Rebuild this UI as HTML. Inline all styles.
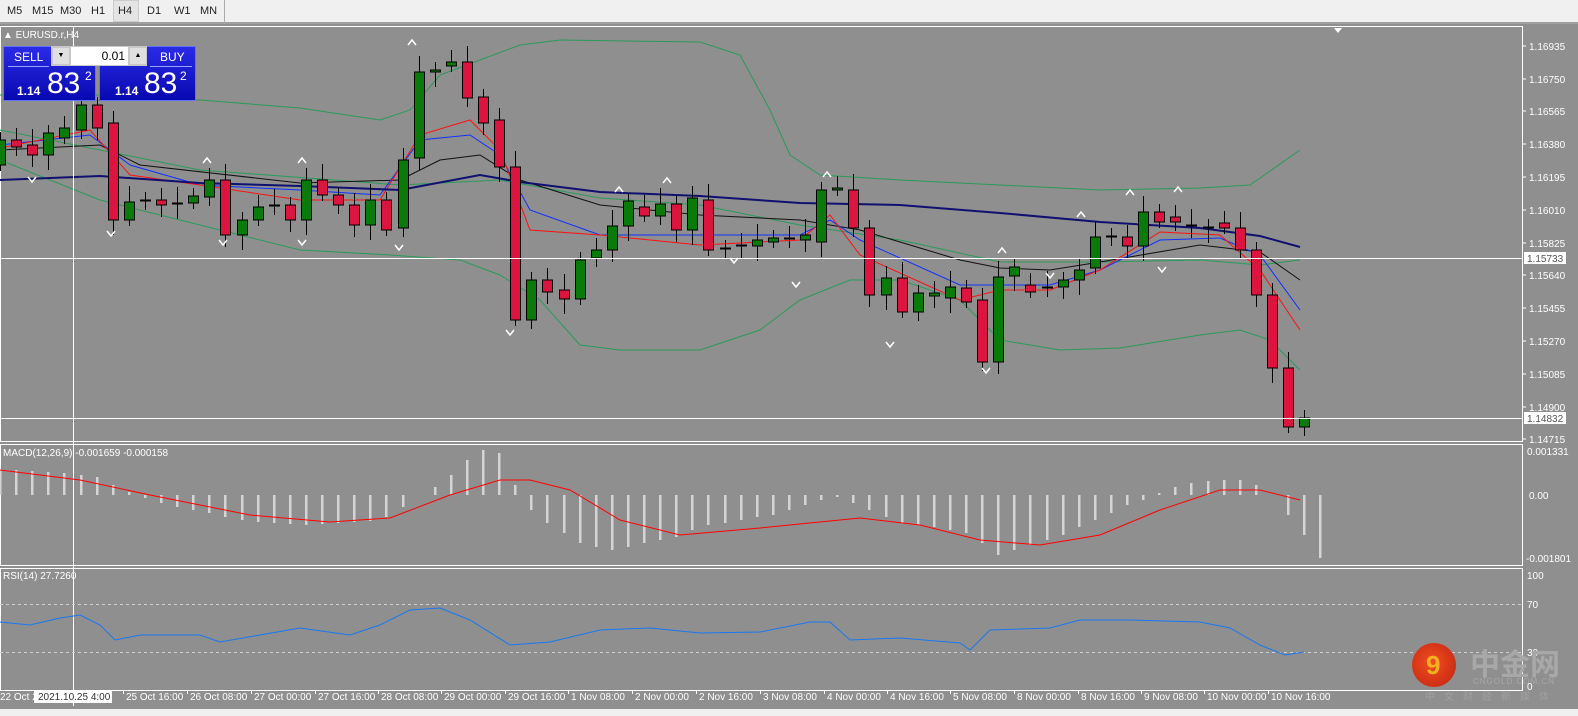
<!DOCTYPE html>
<html><head><meta charset="utf-8"><style>
*{margin:0;padding:0;box-sizing:border-box}
body{width:1578px;height:716px;overflow:hidden;background:#8f8f8f;font-family:"Liberation Sans",sans-serif;position:relative}
#tb{position:absolute;left:0;top:0;width:1578px;height:24px;background:#f0f0f0;border-bottom:2px solid #a0a0a0}
#tb span{position:absolute;top:5px;font-size:11px;color:#222}
#h4{position:absolute;left:113px;top:0;width:26px;height:22px;border:1px solid #ccc;background:#e4e4e4}
#sep{position:absolute;left:224px;top:0;width:1px;height:24px;background:#aaa}
.panel{position:absolute;background:linear-gradient(#2b2be8,#0808b0);color:#fff;border:1px solid #6070ff}
svg{position:absolute;left:0;top:0}
</style></head><body>
<div id="tb"><div id="h4"></div><div id="sep"></div>
<span style="left:7px">M5</span><span style="left:32px">M15</span><span style="left:60px">M30</span><span style="left:91px">H1</span><span style="left:118px">H4</span><span style="left:147px">D1</span><span style="left:174px">W1</span><span style="left:200px">MN</span></div>
<svg id="s" width="1578" height="716"></svg>
<div style="position:absolute;left:3px;top:46px;width:93px;height:55px" class="panel">
<div style="font-size:12px;position:absolute;left:10px;top:3px">SELL</div>
<div style="position:absolute;left:4px;top:19px;width:41px;border-top:1px solid #9aa0ff"></div>
<div style="position:absolute;left:13px;top:37px;font-size:12px;font-weight:bold">1.14</div>
<div style="position:absolute;left:43px;top:20px;font-size:30px">83</div>
<div style="position:absolute;left:81px;top:22px;font-size:12px">2</div></div>
<div style="position:absolute;left:99px;top:46px;width:97px;height:55px" class="panel">
<div style="font-size:12px;position:absolute;left:60px;top:3px">BUY</div>
<div style="position:absolute;left:50px;top:19px;width:42px;border-top:1px solid #9aa0ff"></div>
<div style="position:absolute;left:15px;top:37px;font-size:12px;font-weight:bold">1.14</div>
<div style="position:absolute;left:44px;top:20px;font-size:30px">83</div>
<div style="position:absolute;left:80px;top:22px;font-size:12px">2</div></div>
<div style="position:absolute;left:51px;top:46px;width:96px;height:20px;background:#c8c8c8"></div>
<div style="position:absolute;left:53px;top:48px;width:16px;height:16px;background:#e0e0e0;font-size:7px;text-align:center;line-height:16px">▼</div>
<div style="position:absolute;left:71px;top:47px;width:57px;height:18px;background:#fff;font-size:12px;text-align:right;padding-right:3px;line-height:18px">0.01</div>
<div style="position:absolute;left:130px;top:48px;width:16px;height:16px;background:#e0e0e0;font-size:7px;text-align:center;line-height:16px">▲</div>
<div style="position:absolute;left:3px;top:30px;font-size:10px;color:#fff">▲ EURUSD.r,H4</div>
<div style="position:absolute;left:3px;top:448px;font-size:10px;color:#fff">MACD(12,26,9) -0.001659 -0.000158</div>
<div style="position:absolute;left:3px;top:571px;font-size:10px;color:#fff">RSI(14) 27.7260</div>
<div style="position:absolute;left:1412px;top:643px;width:44px;height:44px;border-radius:50%;background:radial-gradient(circle at 45% 45%,#f05020,#c02010);"></div>
<div style="position:absolute;left:1426px;top:650px;font-size:26px;color:#f5b020;font-weight:bold">9</div>
<div style="position:absolute;left:1470px;top:640px;font-size:30px;color:#a8a8a8;font-family:'Noto Sans CJK SC',sans-serif;font-weight:bold">中金网</div>
<div style="position:absolute;left:1473px;top:677px;font-size:8px;color:#a8a8a8;letter-spacing:1px">CNGOLD.COM.CN</div>
<div style="position:absolute;left:1425px;top:688px;font-size:10px;color:#a0a0a0;letter-spacing:9px;font-family:'Noto Sans CJK SC',sans-serif">中文财经新媒体</div>
<script>
const s=document.getElementById('s');let h='';
const L=(x1,y1,x2,y2,c,w,d)=>h+=`<line x1="${x1}" y1="${y1}" x2="${x2}" y2="${y2}" stroke="${c}" stroke-width="${w||1}" ${d?'stroke-dasharray="3,3"':''}/>`;
const T=(x,y,t,c,a)=>h+=`<text x="${x}" y="${y}" font-size="10" fill="${c||'#fff'}" font-family="Liberation Sans" ${a?'text-anchor="'+a+'"':''}>${t}</text>`;
const P=(pts,c,w)=>h+=`<polyline fill="none" stroke="${c}" stroke-width="${w||1}" points="${pts.map(p=>p.join(',')).join(' ')}"/>`;
// frames
h+=`<rect x="0.5" y="26.5" width="1522" height="415" fill="none" stroke="#fff"/>`;
h+=`<rect x="0.5" y="444.5" width="1522" height="121" fill="none" stroke="#fff"/>`;
h+=`<rect x="0.5" y="568.5" width="1522" height="122" fill="none" stroke="#fff"/>`;
h+=`<polygon points="1334,28 1342,28 1338,33" fill="#fff"/>`;
// price labels
const pl=[[46,'1.16935'],[79,'1.16750'],[111,'1.16565'],[144,'1.16380'],[177,'1.16195'],[210,'1.16010'],[243,'1.15825'],[275,'1.15640'],[308,'1.15455'],[341,'1.15270'],[374,'1.15085'],[407,'1.14900'],[439,'1.14715']];
pl.forEach(p=>{L(1522,p[0],1526,p[0],'#fff');T(1529,p[0]+4,p[1])});
// BB & MAs
P([[0,95],[100,95],[200,100],[300,108],[380,120],[410,110],[440,75],[480,60],[520,45],[560,40],[700,42],[740,55],[770,110],[790,155],[820,175],[900,180],[1000,185],[1100,190],[1200,188],[1250,185],[1300,150]],'#2a9a5a');
P([[0,160],[100,200],[200,225],[300,250],[390,255],[460,260],[500,275],[540,300],[580,345],[620,350],[700,350],[760,330],[800,300],[850,280],[900,280],[960,300],[1000,340],[1060,350],[1120,348],[1200,335],[1240,330],[1270,340],[1300,370]],'#2a9a5a');
P([[0,130],[200,170],[400,185],[500,180],[600,198],[700,205],[800,225],[900,240],[1000,262],[1100,262],[1200,260],[1260,265],[1300,260]],'#2a9a5a');
P([[0,150],[100,145],[140,165],[300,183],[400,180],[440,160],[480,155],[520,180],[600,205],[700,215],[800,220],[860,230],[960,260],[1000,268],[1050,270],[1100,262],[1200,245],[1260,252],[1300,280]],'#111');
P([[0,145],[90,135],[130,165],[200,185],[300,190],[380,195],[420,140],[470,135],[500,155],[530,210],[600,235],[700,235],[800,235],[830,220],[860,240],[960,285],[1000,285],[1050,285],[1100,270],[1160,240],[1220,238],[1260,255],[1300,310]],'#1030ff');
P([[0,148],[90,130],[130,175],[200,185],[300,200],[380,200],[420,135],[470,120],[500,150],[530,230],[600,235],[700,245],[800,240],[830,215],[860,255],[960,300],[1000,290],[1050,290],[1100,270],[1160,232],[1220,235],[1260,270],[1300,330]],'#ff1010');
P([[0,180],[100,176],[200,183],[300,186],[400,190],[480,175],[520,182],[600,192],[700,196],[800,203],[900,205],[1000,213],[1100,222],[1200,228],[1260,236],[1300,247]],'#101070',2);
// candles [o,c]
const C=[[165,140],[140,147],[145,155],[155,133],[138,128],[130,105],[105,128],[123,220],[220,202],[200,201],[200,205],[203,204],[203,196],[197,180],[180,235],[235,220],[220,207],[205,206],[205,220],[220,180],[180,195],[195,205],[205,225],[225,200],[200,230],[228,160],[158,72],[72,70],[66,62],[62,98],[97,123],[120,167],[167,320],[320,280],[280,292],[290,299],[299,260],[258,250],[250,226],[226,201],[207,216],[216,204],[204,230],[230,198],[200,250],[248,249],[245,246],[246,240],[242,238],[238,239],[240,235],[242,190],[190,188],[190,228],[228,295],[295,278],[278,312],[312,293],[296,293],[298,287],[288,302],[300,362],[362,277],[276,267],[285,292],[287,288],[287,280],[280,270],[268,237],[236,237],[237,246],[246,212],[212,222],[217,222],[225,226],[227,228],[223,228],[228,250],[250,295],[295,368],[368,427],[427,418]];
C.forEach((c,i)=>{const x=Math.round(i*16.1)+0.5;const t=Math.min(c[0],c[1]),b=Math.max(c[0],c[1]);const up=c[1]<c[0];
L(x,t-8-(i%3)*4,x,b+6+(i%4)*3,'#000');
h+=`<rect x="${x-5}" y="${t}" width="10" height="${Math.max(b-t,1)}" fill="${up?'#0a7a0a':'#dc1440'}" stroke="#000" stroke-width="1"/>`;});
// fractals
[[207,158,1],[302,158,1],[412,40,1],[619,187,1],[667,178,1],[827,172,1],[1002,248,1],[1081,212,1],[1130,190,1],[1178,187,1],[32,182,0],[111,236,0],[223,245,0],[302,245,0],[399,250,0],[510,335,0],[734,263,0],[796,287,0],[890,347,0],[986,373,0],[1050,278,0],[1162,272,0]].forEach(f=>{
if(f[2])h+=`<polyline points="${f[0]-4},${f[1]+5} ${f[0]},${f[1]} ${f[0]+4},${f[1]+5}" fill="none" stroke="#fff" stroke-width="1.5"/>`;
else h+=`<polyline points="${f[0]-4},${f[1]-5} ${f[0]},${f[1]} ${f[0]+4},${f[1]-5}" fill="none" stroke="#fff" stroke-width="1.5"/>`;});
// hlines
L(0,258.5,1522,258.5,'#fff');L(0,418.5,1522,418.5,'#fff');
h+=`<rect x="1524" y="252" width="42" height="12" fill="#fff"/>`;T(1527,262,'1.15733','#555');
h+=`<rect x="1524" y="412" width="42" height="12" fill="#fff"/>`;T(1527,422,'1.14832','#555');
L(73.5,26,73.5,706,'#fff');
// MACD
const hv=[25,25,24,23,22,20,18,10,3,-3,-8,-12,-15,-18,-22,-25,-27,-28,-29,-30,-29,-28,-27,-26,-22,-12,0,8,20,35,45,42,10,-15,-28,-38,-48,-52,-55,-52,-48,-45,-42,-35,-30,-28,-25,-22,-20,-15,-10,-5,-2,-8,-15,-22,-28,-30,-32,-35,-38,-48,-60,-55,-50,-45,-40,-32,-25,-18,-10,-5,2,8,12,14,15,15,10,0,-20,-40,-63];
hv.forEach((v,i)=>{const x=Math.round(i*16.1);if(Math.abs(v)>0)h+=`<rect x="${x-1}" y="${Math.min(495,495-v)}" width="2.5" height="${Math.abs(v)}" fill="#d4d4d4"/>`;});
P([[0,470],[80,480],[150,495],[250,515],[330,522],[390,518],[450,495],[500,480],[530,480],[570,490],[620,520],[680,535],[760,528],[860,518],[920,525],[980,540],[1040,545],[1100,535],[1160,510],[1220,490],[1260,490],[1300,500]],'#ff0000');
T(1527,455,'0.001331');T(1529,499,'0.00');T(1526,562,'-0.001801');
// RSI
L(0,604.5,1522,604.5,'#d0d0d0',1,1);L(0,652.5,1522,652.5,'#d0d0d0',1,1);
P([[0,622],[30,625],[60,618],[80,615],[100,625],[115,640],[140,635],[200,635],[220,642],[300,628],[350,635],[380,625],[410,610],[440,608],[470,620],[510,645],[550,642],[600,630],[650,628],[700,633],[760,632],[810,622],[830,622],[850,640],[900,638],[960,643],[970,650],[990,630],[1050,628],[1080,620],[1130,620],[1200,622],[1230,628],[1260,645],[1285,655],[1304,652]],'#1878f0');
T(1527,579,'100');T(1527,608,'70');T(1527,656,'30');T(1527,690,'0');
// time axis
T(0,700,'22 Oct 2');h+=`<rect x="34" y="690" width="78" height="13" fill="#fff"/>`;T(38,700,'2021.10.25 4:00','#333');
[[126,'25 Oct 16:00'],[190,'26 Oct 08:00'],[254,'27 Oct 00:00'],[318,'27 Oct 16:00'],[381,'28 Oct 08:00'],[444,'29 Oct 00:00'],[508,'29 Oct 16:00'],[571,'1 Nov 08:00'],[635,'2 Nov 00:00'],[699,'2 Nov 16:00'],[763,'3 Nov 08:00'],[827,'4 Nov 00:00'],[890,'4 Nov 16:00'],[953,'5 Nov 08:00'],[1017,'8 Nov 00:00'],[1081,'8 Nov 16:00'],[1144,'9 Nov 08:00'],[1207,'10 Nov 00:00'],[1271,'10 Nov 16:00']].forEach(t=>{L(t[0]-2.5,690,t[0]-2.5,694,'#fff');T(t[0],700,t[1])});
h+=`<rect x="0" y="709" width="1578" height="7" fill="#f0f0f0"/>`;
s.innerHTML=h;
</script>
</body></html>
